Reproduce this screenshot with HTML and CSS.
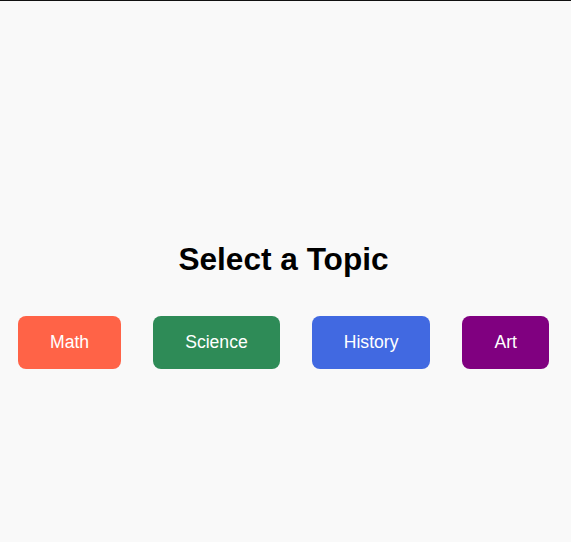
FILE: index.html
```html
<!DOCTYPE html>
<html>
<head>
<meta charset="utf-8">
<link rel="stylesheet" href="styles.css">
</head>
<body>
<main class="page">
  <h1 class="title">Select a Topic</h1>
  <div class="topics">
    <button class="topic math">Math</button>
    <button class="topic science">Science</button>
    <button class="topic history">History</button>
    <button class="topic art">Art</button>
  </div>
</main>
</body>
</html>
```
FILE: styles.css
```css
html, body {
  margin: 0;
  padding: 0;
}
body {
  background: #f9f9f9;
  border-top: 1px solid #111;
  font-family: "Liberation Sans", Arial, sans-serif;
  min-height: 541px;
}
.page {
  display: flex;
  flex-direction: column;
  align-items: center;
  padding: 240px 4px 0 0;
}
.title {
  margin: 0 0 38px;
  font-size: 31.6px;
  line-height: 37px;
  font-weight: bold;
  color: #000;
}
.topics {
  display: flex;
  justify-content: center;
  gap: 32px;
}
.topic {
  border: none;
  border-radius: 8px;
  padding: 16px 32px;
  font-family: "Liberation Sans", Arial, sans-serif;
  font-size: 17.6px;
  line-height: 21px;
  color: #fff;
  cursor: pointer;
}
.math { background: #ff6347; }
.science { background: #2e8b57; }
.history { background: #4169e1; }
.art { background: #800080; }
```
